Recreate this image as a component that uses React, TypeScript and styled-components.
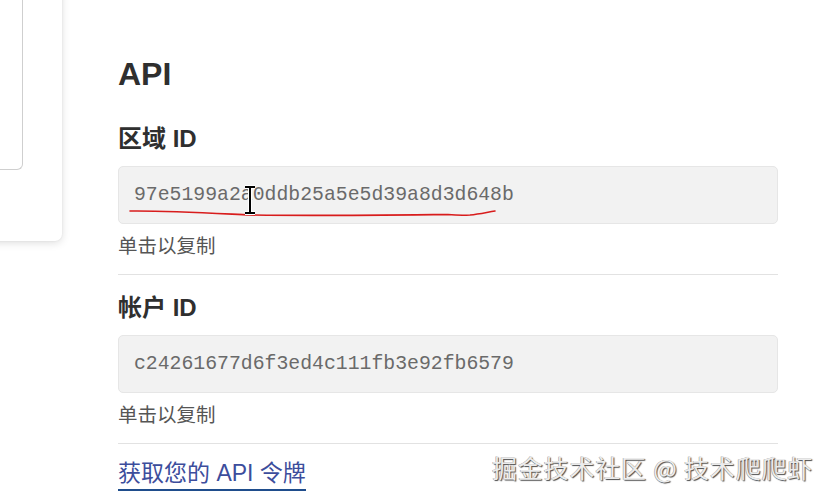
import React from "react";
import styled, { createGlobalStyle } from "styled-components";

const Global = createGlobalStyle`
  html, body { margin: 0; padding: 0; background: #ffffff; }
  body {
    width: 819px; height: 499px; overflow: hidden;
    font-family: "Liberation Sans", "Noto Sans CJK SC", sans-serif;
    color: #333;
  }
`;

const Page = styled.div`
  position: relative;
  display: flex;
  align-items: flex-start;
  width: 819px;
  height: 499px;
  overflow: hidden;
`;

const SideCard = styled.aside`
  flex: none;
  box-sizing: border-box;
  width: 302px;
  height: 300px;
  margin-left: -240px;
  margin-top: -59px;
  padding: 0 39px 71px 0;
  display: flex;
  background: #fff;
  border-radius: 7px;
  box-shadow: 0 2px 8px rgba(0, 0, 0, 0.13), 0 0 2px rgba(0, 0, 0, 0.08);
`;

const SideInner = styled.div`
  flex: 1;
  border: 1px solid #cfcfcf;
  border-radius: 6px;
  border-top: none;
`;

const Main = styled.main`
  flex: none;
  width: 660px;
  margin-left: 56px;
  padding-top: 54px;
  display: flex;
  flex-direction: column;
`;

const Title = styled.h1`
  margin: 0;
  font-size: 32px;
  line-height: 40px;
  font-weight: 700;
  color: #2f2f2f;
`;

const Section = styled.section<{ $first?: boolean }>`
  display: flex;
  flex-direction: column;
  margin-top: ${(p) => (p.$first ? "31px" : "19px")};
`;

const Label = styled.h2`
  margin: 0 0 13px;
  font-size: 24px;
  line-height: 28px;
  font-weight: 700;
  color: #2f2f2f;
`;

const CodeBox = styled.div`
  position: relative;
  box-sizing: border-box;
  height: 58px;
  display: flex;
  align-items: center;
  padding: 0 15px;
  background: #f2f2f2;
  border: 1px solid #e6e6e6;
  border-radius: 5px;
  font-family: "Liberation Mono", monospace;
  font-size: 19.8px;
  color: #6a6a6a;
  cursor: pointer;
`;

const Hint = styled.div`
  margin-top: 10px;
  font-size: 19.5px;
  line-height: 24px;
  color: #555;
`;

const Rule = styled.hr`
  margin: 16px 0 0;
  border: none;
  border-top: 1px solid #e2e2e2;
  height: 0;
`;

const TokenLink = styled.a`
  align-self: flex-start;
  margin-top: 15px;
  font-size: 23px;
  line-height: 28px;
  padding-bottom: 2px;
  color: #3c4d9c;
  text-decoration: none;
  border-bottom: 2px solid #1f4d8c;
`;

const Annotation = styled.svg`
  position: absolute;
  left: -1px;
  top: -1px;
  pointer-events: none;
  overflow: visible;
`;

const Watermark = styled.div`
  position: absolute;
  left: 492px;
  top: 451px;
  font-family: "Noto Sans CJK SC", sans-serif;
  font-size: 25px;
  line-height: 32px;
  color: #ececec;
  letter-spacing: 0.8px;
  white-space: nowrap;
  text-shadow: 1px 1px 1px #4a4a4a, -0.5px -0.5px 0 #9a9a9a;
`;

const ids = [
  { label: "区域 ID", value: "97e5199a2a0ddb25a5e5d39a8d3d648b", annotated: true },
  { label: "帐户 ID", value: "c24261677d6f3ed4c111fb3e92fb6579", annotated: false },
];

function Scribble() {
  return (
    <Annotation width="660" height="58" viewBox="0 0 660 58">
      <path
        d="M12 45 C 50 44.5, 100 47.5, 132 49 C 200 50, 280 49, 330 48.5 C 340 49.5, 345 49.5, 352 49 C 362 48, 370 46, 377 45"
        fill="none"
        stroke="#d81c1c"
        strokeWidth="1.6"
        strokeLinecap="round"
      />
      <g fill="none">
        <path d="M132 21 L132 47 M127 21 L137 21 M127 47 L137 47" stroke="#fff" strokeWidth="4" />
        <path d="M132 21 L132 47 M127 21 L137 21 M127 47 L137 47" stroke="#000" strokeWidth="2" />
      </g>
    </Annotation>
  );
}

export default function App() {
  return (
    <Page>
      <Global />
      <SideCard>
        <SideInner />
      </SideCard>
      <Main>
        <Title>API</Title>
        {ids.map((item, i) => (
          <Section key={item.label} $first={i === 0}>
            <Label>{item.label}</Label>
            <CodeBox>
              {item.value}
              {item.annotated && <Scribble />}
            </CodeBox>
            <Hint>单击以复制</Hint>
            <Rule />
          </Section>
        ))}
        <TokenLink href="#">获取您的 API 令牌</TokenLink>
      </Main>
      <Watermark>掘金技术社区 @ 技术爬爬虾</Watermark>
    </Page>
  );
}
